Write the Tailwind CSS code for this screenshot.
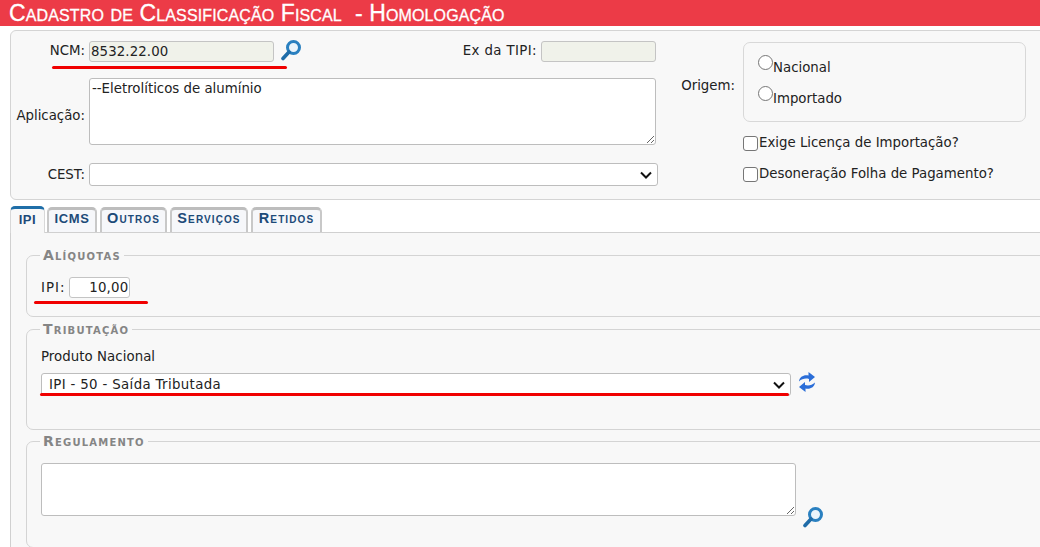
<!DOCTYPE html>
<html lang="pt-BR">
  <head>
    <meta charset="UTF-8" />
    <title>Cadastro de Classificação Fiscal</title>
    <script src="https://cdn.jsdelivr.net/npm/@tailwindcss/browser@4"></script>
  </head>
  <body class="relative h-[547px] w-[1040px] overflow-hidden bg-white font-['DejaVu_Sans',sans-serif] text-[13.33px] text-[#222]">
    <!-- titulo -->
    <header class="flex h-[26px] items-center bg-[#ec3b47] pl-[9px] font-['Liberation_Sans',sans-serif] text-[23px] leading-none tracking-[0.13px] whitespace-pre text-white [-webkit-text-stroke:0.3px_white] [font-variant:small-caps]">Cadastro de Classificação Fiscal  - Homologação</header>

    <!-- dados principais -->
    <section class="mt-1 ml-[10px] flex h-[170px] w-[1060px] rounded-tl-[6px] rounded-bl-[6px] border border-[#d4d4d4] bg-[#f8f8f8] pt-[9px]">
      <div class="w-[650px] shrink-0">
        <div class="flex h-[22px] items-center">
          <label class="w-[74px] text-right">NCM:</label>
          <input value="8532.22.00" class="ml-[4px] h-[21px] w-[185px] rounded-[3px] border border-[#c4c4c4] bg-[#f0f2ea] pl-[1px] text-[13.33px] tracking-[0.1px]" />
          <svg class="mt-[-3px] ml-[6px] h-[22px] w-[22px]" viewBox="0 0 22 22">
            <circle cx="13.5" cy="8.5" r="6" fill="#eaf4fb" stroke="#2a80c0" stroke-width="3" />
            <path d="M9 13 L3 19.5" stroke="#1f6ca8" stroke-width="3.6" stroke-linecap="round" />
          </svg>
          <label class="ml-[155px] w-[80px] text-right tracking-[0.4px] whitespace-nowrap">Ex da TIPI:</label>
          <input disabled class="ml-[4px] h-[21px] w-[115px] rounded-[3px] border border-[#c4c4c4] bg-[#f0f2ea]" />
        </div>
        <div class="mt-[16px] flex h-[67px]">
          <label class="mt-[28px] w-[74px] text-right">Aplicação:</label>
          <textarea class="ml-[4px] h-[67px] w-[567px] rounded-[3px] border border-[#bdbdbd] bg-white px-[2px] pt-[1px] text-[13.33px] leading-[18px]">--Eletrolíticos de alumínio</textarea>
        </div>
        <div class="mt-[18px] flex h-[23px] items-center">
          <label class="w-[74px] text-right">CEST:</label>
          <div class="relative ml-[4px] h-[23px] w-[569px] rounded-[3px] border border-[#bdbdbd] bg-white">
            <svg class="absolute top-[7px] right-[5px] h-[9px] w-[12px]" viewBox="0 0 12 9"><path d="M1 1.5 L6 6.5 L11 1.5" fill="none" stroke="#111" stroke-width="2" /></svg>
          </div>
        </div>
      </div>
      <div class="flex">
        <label class="mt-[36px] ml-[20px] w-[54px] text-right">Origem:</label>
        <div class="ml-[8px]">
          <div class="mt-[2px] flex h-[80px] w-[283px] flex-col gap-[13px] rounded-[7px] border border-[#d8d8d8] pt-[12px] pl-[14px]">
            <div class="flex h-[18px]"><span class="h-[15px] w-[15px] rounded-full border border-[#767676] bg-white"></span><span class="mt-[4px] leading-[18px]">Nacional</span></div>
            <div class="flex h-[18px]"><span class="h-[15px] w-[15px] rounded-full border border-[#767676] bg-white"></span><span class="mt-[4px] leading-[18px]">Importado</span></div>
          </div>
          <div class="mt-[13px] flex h-[16px] items-center"><span class="h-[15px] w-[15px] rounded-[3px] border border-[#767676] bg-white"></span><span class="ml-[1px]">Exige Licença de Importação?</span></div>
          <div class="mt-[15px] flex h-[16px] items-center"><span class="h-[15px] w-[15px] rounded-[3px] border border-[#767676] bg-white"></span><span class="ml-[1px]">Desoneração Folha de Pagamento?</span></div>
        </div>
      </div>
    </section>

    <!-- abas -->
    <nav class="mt-[6px] ml-[10px] flex h-[26px] items-start gap-[3px] font-['Liberation_Sans',sans-serif] text-[14.5px] font-bold tracking-[1.1px] text-[#1c4a78] [font-variant:small-caps]">
      <span class="relative z-10 mr-[-1px] flex h-[27px] w-[35px] items-center justify-center rounded-t-[5px] border-x border-t-[3px] border-x-[#d8d8d8] border-t-[#1f6ea8] bg-[#f8f8f8] pb-[3px] text-[13px] tracking-[0.6px]">IPI</span>
      <span class="mt-[1px] flex h-[25px] w-[50px] items-center justify-center rounded-t-[5px] border-x-2 border-t-[3px] border-x-[#c8c8c8] border-t-[#bdbdbd] bg-[#f6f7fa] pb-[4px] text-[13px] tracking-[0.6px]">ICMS</span>
      <span class="mt-[1px] flex h-[25px] w-[67px] items-center justify-center rounded-t-[5px] border-x-2 border-t-[3px] border-x-[#c8c8c8] border-t-[#bdbdbd] bg-[#f6f7fa] pb-[4px]">Outros</span>
      <span class="mt-[1px] flex h-[25px] w-[78px] items-center justify-center rounded-t-[5px] border-x-2 border-t-[3px] border-x-[#c8c8c8] border-t-[#bdbdbd] bg-[#f6f7fa] pb-[4px]">Serviços</span>
      <span class="mt-[1px] flex h-[25px] w-[71px] items-center justify-center rounded-t-[5px] border-x-2 border-t-[3px] border-x-[#c8c8c8] border-t-[#bdbdbd] bg-[#f6f7fa] pb-[4px]">Retidos</span>
    </nav>

    <main class="ml-[10px] h-[340px] w-[1060px] border-t border-l border-[#d0d0d0] bg-[#f8f8f8] pt-[14px] pl-[15px]">
      <fieldset class="h-[70px] w-[1040px] rounded-[7px] border border-[#d4d4d4] pl-[14px]">
        <legend class="ml-[-1px] px-[3px] text-[14px] leading-[16px] font-bold tracking-[1.2px] text-[#858585] [font-variant:small-caps]">Alíquotas</legend>
        <div class="mt-[14px] flex h-[21px] items-center">
          <label class="tracking-[1px]">IPI:</label>
          <input value="10,00" class="ml-[4px] h-[21px] w-[61px] rounded-[3px] border border-[#c4c4c4] bg-white pr-[1px] text-right text-[13.33px] tracking-[0.2px]" />
        </div>
      </fieldset>

      <fieldset class="mt-[4px] h-[109px] w-[1040px] rounded-[7px] border border-[#d4d4d4] pl-[14px]">
        <legend class="ml-[-1px] px-[3px] text-[14px] leading-[16px] font-bold tracking-[1.2px] text-[#858585] [font-variant:small-caps]">Tributação</legend>
        <p class="mt-[12px] leading-[16px] tracking-[0.05px]">Produto Nacional</p>
        <div class="mt-[8px] flex">
          <div class="relative flex h-[23px] w-[750px] items-center rounded-[3px] border border-[#bdbdbd] bg-white pl-[7px] tracking-[0.35px]">
            IPI - 50 - Saída Tributada
            <svg class="absolute top-[7px] right-[5px] h-[9px] w-[12px]" viewBox="0 0 12 9"><path d="M1 1.5 L6 6.5 L11 1.5" fill="none" stroke="#111" stroke-width="2" /></svg>
          </div>
          <svg class="mt-[-2px] ml-[7px] h-[22px] w-[18px]" viewBox="0 0 18 22">
            <path d="M1 10.5 C1.5 5.5 6 3.5 10.5 4.5 L10.5 1 L17 6 L11 11 L11 8 C8 7 4 7.5 1 10.5 Z" fill="#2b6ed8" />
            <path d="M17 11.5 C16.5 16.5 12 18.5 7.5 17.5 L7.5 21 L1 16 L7 11 L7 14 C10 15 14 14.5 17 11.5 Z" fill="#2b6ed8" />
          </svg>
        </div>
      </fieldset>

      <fieldset class="mt-[3px] h-[115px] w-[1040px] rounded-[7px] border border-[#d4d4d4] pl-[14px]">
        <legend class="ml-[-1px] px-[3px] text-[14px] leading-[16px] font-bold tracking-[1.2px] text-[#858585] [font-variant:small-caps]">Regulamento</legend>
        <div class="mt-[14px] flex">
          <textarea class="h-[53px] w-[755px] rounded-[3px] border border-[#bdbdbd] bg-white"></textarea>
          <svg class="mt-[43px] ml-[6px] h-[22px] w-[22px]" viewBox="0 0 22 22">
            <circle cx="13.5" cy="8.5" r="6" fill="#eaf4fb" stroke="#2a80c0" stroke-width="3" />
            <path d="M9 13 L3 19.5" stroke="#1f6ca8" stroke-width="3.6" stroke-linecap="round" />
          </svg>
        </div>
      </fieldset>
    </main>

    <!-- marcações em vermelho por cima da tela -->
    <div class="absolute top-[66px] left-[52px] h-[3px] w-[235px] rounded-full bg-[#f00000]"></div>
    <div class="absolute top-[301px] left-[34px] h-[3px] w-[114px] rounded-full bg-[#f00000]"></div>
    <div class="absolute top-[393px] left-[40px] h-[3px] w-[749px] rounded-full bg-[#f00000]"></div>
  </body>
</html>
